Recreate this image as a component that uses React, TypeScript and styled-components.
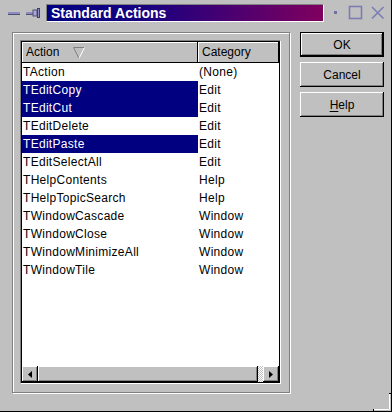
import * as React from "react";
import styled, { createGlobalStyle } from "styled-components";

const GlobalStyle = createGlobalStyle`
  html, body {
    margin: 0;
    padding: 0;
    background: #c0c0c0;
  }
  body {
    font-family: "Liberation Sans", Arial, sans-serif;
    font-size: 12px;
  }
`;

const Window = styled.div`
  position: relative;
  width: 392px;
  height: 412px;
  box-sizing: border-box;
  display: flex;
  flex-direction: column;
  background: #c0c0c0;
  border-right: 1px solid #000;
  border-bottom: 1px solid #000;
  overflow: hidden;
  color: #000;
`;

const TitleBar = styled.div`
  display: flex;
  align-items: flex-start;
  height: 24px;
`;

const TitleBox = styled.div`
  flex: 1;
  height: 18px;
  margin-top: 4px;
  box-sizing: border-box;
  display: flex;
  align-items: center;
  padding-left: 4px;
  border-style: solid;
  border-width: 1px;
  border-color: #808080 #fff #fff #808080;
  background: linear-gradient(to right, #000080 0%, #180080 35%, #80005f 100%);
  color: #fff;
  font-weight: bold;
  font-size: 14px;
`;

const Body = styled.div`
  flex: 1;
  display: flex;
  gap: 10px;
  padding: 8px 7px 18px 12px;
  min-height: 0;
`;

const GroupBox = styled.div`
  width: 278px;
  box-sizing: border-box;
  display: flex;
  flex-direction: column;
  padding: 7px 8px 8px 7px;
  border: 1px solid #808080;
  box-shadow: inset 1px 1px 0 #fff, 1px 1px 0 #fff;
`;

const ListFrame = styled.div`
  flex: 1;
  display: flex;
  border-style: solid;
  border-width: 1px;
  border-color: #808080 #fff #fff #808080;
  min-height: 0;
`;

const ListInner = styled.div`
  flex: 1;
  display: flex;
  flex-direction: column;
  border: 1px solid #000;
  background: #fff;
  min-width: 0;
`;

const Header = styled.div`
  display: flex;
  height: 21px;
  background: #c0c0c0;
`;

const HeaderCell = styled.div<{ $width?: number }>`
  ${(p) => (p.$width ? `width: ${p.$width}px;` : "flex: 1;")}
  box-sizing: border-box;
  display: flex;
  align-items: center;
  padding-left: 4px;
  border-right: 1px solid #000;
  border-bottom: 1px solid #000;
  box-shadow: inset 1px 1px 0 #fff;
`;

const SortMark = styled.svg`
  margin-left: 14px;
  margin-top: 1px;
`;

const Rows = styled.div`
  flex: 1;
  background: #fff;
`;

const Row = styled.div`
  display: flex;
  height: 18px;
  line-height: 18px;
`;

const Cell = styled.div<{ $width?: number; $selected?: boolean }>`
  ${(p) => (p.$width ? `width: ${p.$width}px;` : "flex: 1;")}
  box-sizing: border-box;
  padding-left: 1px;
  white-space: nowrap;
  letter-spacing: 0.3px;
  background: ${(p) => (p.$selected ? "#000080" : "transparent")};
  color: ${(p) => (p.$selected ? "#fff" : "#000")};
`;

const ScrollBar = styled.div`
  display: flex;
  height: 16px;
  background: #c0c0c0;
`;

const ArrowButton = styled.div`
  width: 16px;
  height: 16px;
  box-sizing: border-box;
  display: flex;
  align-items: center;
  justify-content: center;
  background: #c0c0c0;
  box-shadow: inset -1px -1px 0 #000, inset 1px 1px 0 #fff, inset -2px -2px 0 #808080;
`;

const Track = styled.div`
  flex: 1;
  display: flex;
  background: repeating-conic-gradient(#fff 0 25%, #c0c0c0 0 50%) 0 0 / 2px 2px;
`;

const Thumb = styled.div<{ $rest: number }>`
  flex: 1;
  margin-right: ${(p) => p.$rest}px;
  background: #c0c0c0;
  box-shadow: inset -1px -1px 0 #000, inset 1px 1px 0 #fff, inset -2px -2px 0 #808080;
`;

const ButtonColumn = styled.div`
  width: 84px;
  display: flex;
  flex-direction: column;
  gap: 5px;
`;

const Button = styled.div<{ $default?: boolean }>`
  height: 25px;
  box-sizing: border-box;
  display: flex;
  align-items: center;
  justify-content: center;
  background: #c0c0c0;
  font-size: 12px;
  border: ${(p) => (p.$default ? "1px solid #000" : "none")};
  box-shadow: inset -1px -1px 0 #000, inset 1px 1px 0 #fff, inset -2px -2px 0 #808080;
  u {
    text-decoration: underline;
    text-underline-offset: 2px;
  }
`;

const ResizeGrip = styled.svg`
  position: absolute;
  right: -1px;
  bottom: -1px;
`;

const actions: [string, string, boolean][] = [
  ["TAction", "(None)", false],
  ["TEditCopy", "Edit", true],
  ["TEditCut", "Edit", true],
  ["TEditDelete", "Edit", false],
  ["TEditPaste", "Edit", true],
  ["TEditSelectAll", "Edit", false],
  ["THelpContents", "Help", false],
  ["THelpTopicSearch", "Help", false],
  ["TWindowCascade", "Window", false],
  ["TWindowClose", "Window", false],
  ["TWindowMinimizeAll", "Window", false],
  ["TWindowTile", "Window", false],
];

const ACTION_COL = 176;

function LeftTitleIcons() {
  return (
    <svg width="46" height="24" viewBox="0 0 46 24">
      {/* dash */}
      <rect x="8" y="12" width="12" height="2" fill="#8c8cc0" />
      <rect x="8" y="14" width="12" height="1" fill="#505070" />
      {/* pin */}
      <rect x="26" y="12" width="8" height="2" fill="#8c8cc0" />
      <rect x="26" y="14" width="8" height="1" fill="#505070" />
      <rect x="33" y="10" width="4" height="6" fill="#a8a8d8" stroke="#505070" strokeWidth="1" />
      <rect x="37.5" y="8.5" width="2" height="9" fill="#8c8cc0" stroke="#404060" strokeWidth="1" />
    </svg>
  );
}

function RightTitleIcons() {
  return (
    <svg width="67" height="24" viewBox="0 0 67 24">
      <rect x="10" y="11" width="3" height="3" fill="#7070a8" />
      <rect x="25.5" y="6.5" width="12" height="12" fill="none" stroke="#7c7cb4" strokeWidth="1.6" />
      <path d="M48 7 L59.5 18.5 M59.5 7 L48 18.5" stroke="#7c7cb4" strokeWidth="1.6" fill="none" />
    </svg>
  );
}

export default function App() {
  return (
    <>
      <GlobalStyle />
      <Window>
        <TitleBar>
          <LeftTitleIcons />
          <TitleBox>Standard Actions</TitleBox>
          <RightTitleIcons />
        </TitleBar>
        <Body>
          <GroupBox>
            <ListFrame>
              <ListInner>
                <Header>
                  <HeaderCell $width={ACTION_COL}>
                    Action
                    <SortMark width="12" height="12" viewBox="0 0 12 12">
                      <path d="M0.5 0.5 L11.5 0.5" stroke="#808080" />
                      <path d="M0.5 0.5 L6 11.5" stroke="#808080" />
                      <path d="M11.5 0.5 L6 11.5" stroke="#fff" />
                    </SortMark>
                  </HeaderCell>
                  <HeaderCell>Category</HeaderCell>
                </Header>
                <Rows>
                  {actions.map(([name, cat, sel]) => (
                    <Row key={name}>
                      <Cell $width={ACTION_COL} $selected={sel}>
                        {name}
                      </Cell>
                      <Cell>{cat}</Cell>
                    </Row>
                  ))}
                </Rows>
                <ScrollBar>
                  <ArrowButton>
                    <svg width="4" height="7" viewBox="0 0 4 7">
                      <path d="M4 0 L0 3.5 L4 7 Z" fill="#000" />
                    </svg>
                  </ArrowButton>
                  <Track>
                    <Thumb $rest={5} />
                  </Track>
                  <ArrowButton>
                    <svg width="4" height="7" viewBox="0 0 4 7">
                      <path d="M0 0 L4 3.5 L0 7 Z" fill="#000" />
                    </svg>
                  </ArrowButton>
                </ScrollBar>
              </ListInner>
            </ListFrame>
          </GroupBox>
          <ButtonColumn>
            <Button $default>OK</Button>
            <Button>Cancel</Button>
            <Button>
              <span>
                <u>H</u>elp
              </span>
            </Button>
          </ButtonColumn>
        </Body>
        <ResizeGrip width="20" height="20" viewBox="0 0 20 20">
          <path d="M17.5 1 L17.5 17.5 L1 17.5" stroke="#fff" fill="none" />
          <path d="M17 1.5 L20 1.5" stroke="#000" />
          <path d="M1.5 17 L1.5 20" stroke="#000" />
        </ResizeGrip>
      </Window>
    </>
  );
}
